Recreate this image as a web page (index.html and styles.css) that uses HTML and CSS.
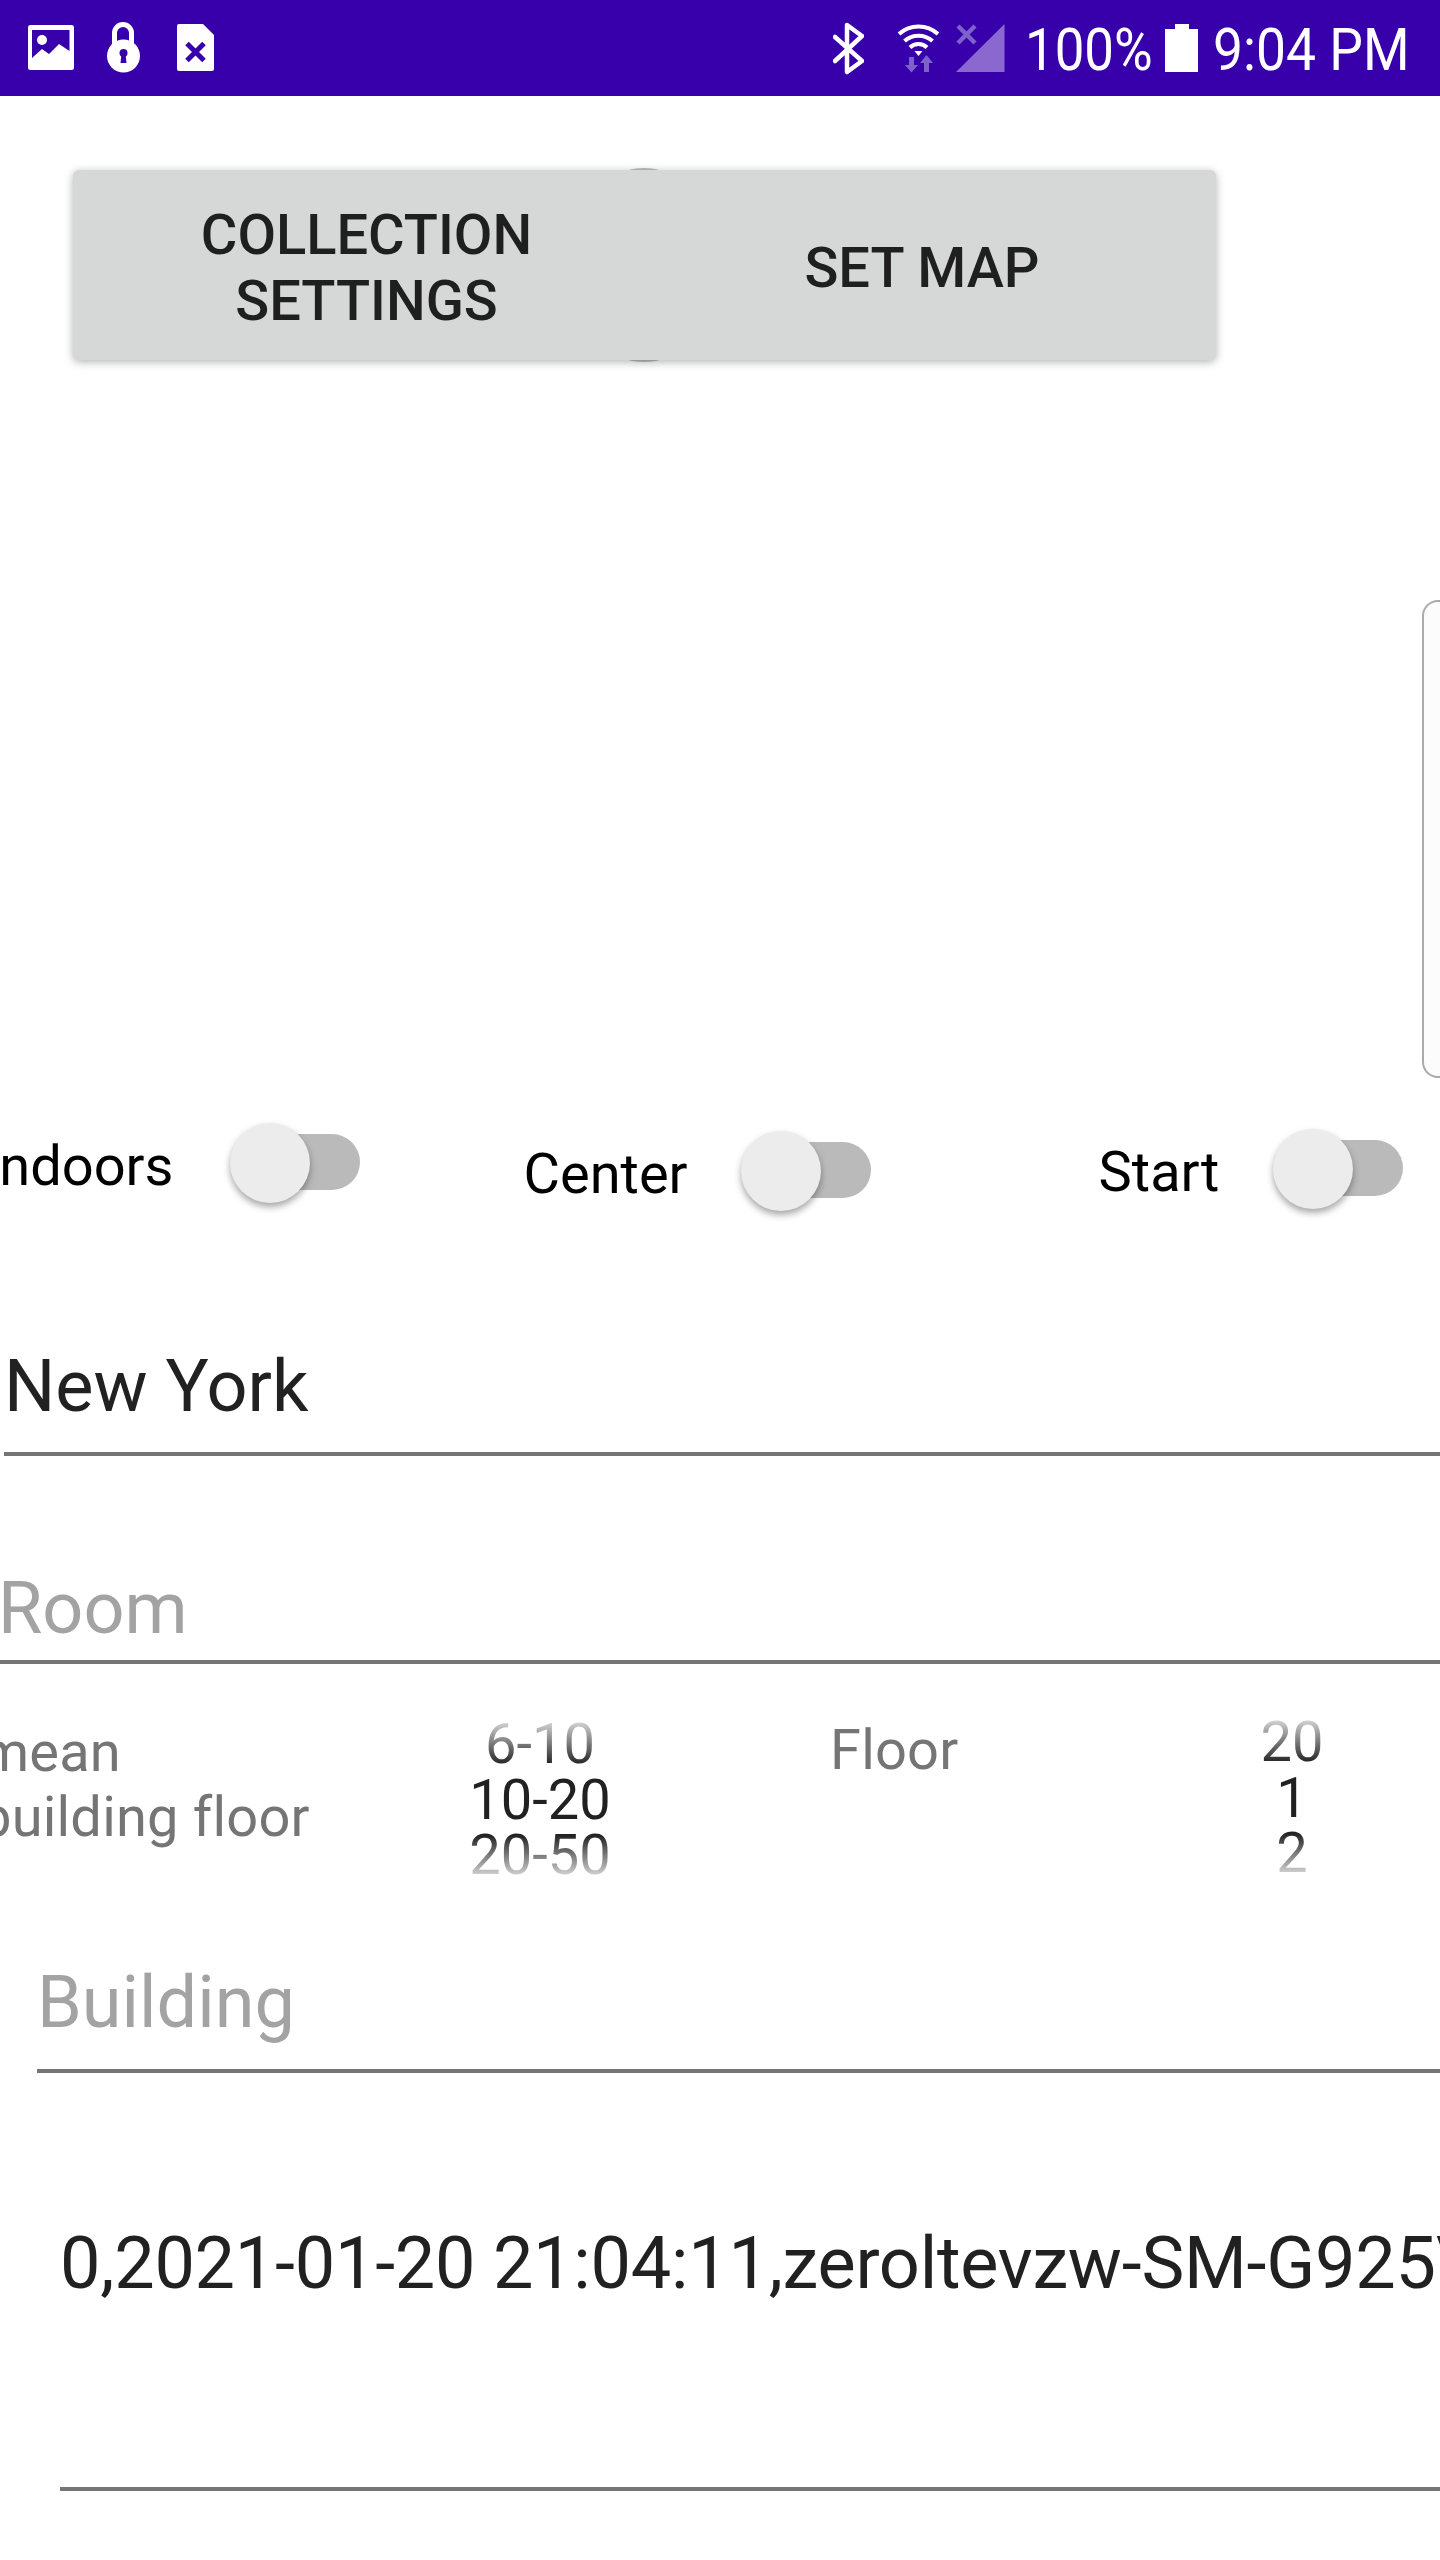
FILE: index.html
```html
<!DOCTYPE html>
<html>
<head>
    <title>Collection</title>
    <meta charset="UTF-8">
    <link rel="stylesheet" href="styles.css">
</head>
<body>
    <div class="status-bar">
        <svg class="icon-image" viewBox="28 0 46 96">
            <rect x="28" y="25" width="46" height="45" rx="2.5" fill="#fff"/>
            <polygon points="32,30 69.5,30 69.5,51 59,44 49,54 42,49 32,58" fill="#3700ab"/>
            <circle cx="42" cy="40" r="5" fill="#fff"/>
        </svg>
        <svg class="icon-lock" viewBox="107 0 33 96">
            <path d="M114.5 46V33a8.500 8.500 0 0 1 17 0v13" fill="none" stroke="#fff" stroke-width="5"/>
            <circle cx="123.500" cy="56" r="16.500" fill="#fff"/>
            <circle cx="123.500" cy="53" r="4" fill="#3700ab"/>
            <polygon points="121.500,54 125.500,54 126.500,63 120.500,63" fill="#3700ab"/>
        </svg>
        <svg class="icon-sim" viewBox="177 0 37 96">
            <path d="M179 24h24l11 11v34a2 2 0 0 1-2 2h-33a2 2 0 0 1-2-2V26a2 2 0 0 1 2-2z" fill="#fff"/>
            <path d="M187 43.500l17 17M204 43.500l-17 17" stroke="#3700ab" stroke-width="5"/>
        </svg>

        <div class="status-right">
            <svg class="icon-bt" viewBox="833 0 31 96">
                <path d="M835 37l27 24-15 11V25l15 11-27 25" fill="none" stroke="#fff" stroke-width="4.500" stroke-linejoin="round" stroke-linecap="round"/>
            </svg>
            <svg class="icon-wifi" viewBox="897 0 43 96">
                <path d="M899 34a29 29 0 0 1 39 0M904.500 41a21 21 0 0 1 28 0M910 47.500a12 12 0 0 1 17 0" fill="none" stroke="#fff" stroke-width="4"/>
                <polygon points="914.500,51 922.500,51 918.500,56" fill="#fff"/>
                <path d="M909 57h5v8h4l-6.500 7.500L905 65h4zM924 72h5v-9h4l-6.500-8-6.500 8h4z" fill="#7d62cc"/>
            </svg>
            <svg class="icon-signal" viewBox="956 0 49 96">
                <polygon points="1004.500,24 1004.500,72 956,72" fill="#8a68cf"/>
                <path d="M958 26l17 17M975 26l-17 17" stroke="#7d62cc" stroke-width="4.500"/>
            </svg>
            <span class="status-text battery-text">100%</span>
            <svg class="icon-battery" viewBox="1164 0 33 96">
                <path d="M1174 24h14v5h9v43h-33V29h10z" fill="#fff"/>
            </svg>
            <span class="status-text time-text">9:04 PM</span>
        </div>
    </div>

    <div class="button-row">
        <button class="flat-button">COLLECTION SETTINGS</button>
        <button class="flat-button second">SET MAP</button>
    </div>

    <div class="side-card"></div>

    <div class="switch-row">
        <div class="switch-group indoors">
            <span class="switch-label">Indoors</span>
            <div class="switch"><div class="thumb"></div><div class="track"></div></div>
        </div>
        <div class="switch-group center">
            <span class="switch-label">Center</span>
            <div class="switch"><div class="thumb"></div><div class="track"></div></div>
        </div>
        <div class="switch-group start">
            <span class="switch-label">Start</span>
            <div class="switch"><div class="thumb"></div><div class="track"></div></div>
        </div>
    </div>

    <div class="field city">New York</div>
    <div class="field room hint">Room</div>

    <div class="picker-row">
        <div class="picker-label first">mean<br>building floor</div>
        <div class="picker">
            <div>6-10</div>
            <div class="current">10-20</div>
            <div>20-50</div>
        </div>
        <div class="picker-label floor">Floor</div>
        <div class="picker second">
            <div>20</div>
            <div class="current">1</div>
            <div>2</div>
        </div>
    </div>

    <div class="field building hint">Building</div>
    <div class="field log">0,2021-01-20 21:04:11,zeroltevzw-SM-G925V</div>
</body>
</html>
```

FILE: styles.css
```css
html, body {
    margin: 0;
    padding: 0;
    background: #ffffff;
}
body {
    width: 1440px;
    height: 2560px;
    overflow: hidden;
    font-family: 'Roboto', sans-serif;
    color: #212121;
}

/* status bar */
.status-bar {
    display: flex;
    height: 96px;
    padding-left: 28px;
    background: #3700ab;
}
.status-bar svg {
    height: 96px;
    flex: none;
}
.icon-image { width: 46px; }
.icon-lock { width: 33px; margin-left: 33px; }
.icon-sim { width: 37px; margin-left: 37px; }
.status-right {
    display: flex;
    margin-left: 619px;
}
.icon-bt { width: 31px; }
.icon-wifi { width: 43px; margin-left: 33px; }
.icon-signal { width: 49px; margin-left: 16px; }
.icon-battery { width: 33px; }
.status-text {
    height: 96px;
    font-size: 60px;
    line-height: 99px;
    color: #ffffff;
    white-space: nowrap;
    transform-origin: left;
}
.battery-text {
    width: 140px;
    margin-left: 20px;
    transform: scaleX(0.88);
}
.time-text {
    width: 190px;
    margin-left: 15px;
    transform: scaleX(0.89);
}

/* buttons */
.button-row {
    position: relative;
    display: flex;
    margin: 74px 0 0 73px;
    filter: drop-shadow(0 2px 4px rgba(0, 0, 0, 0.3));
}
.button-row::before {
    content: "";
    position: absolute;
    top: -2px;
    left: 555px;
    width: 32px;
    height: 194px;
    border-radius: 50% / 3px;
    background: rgba(0, 0, 0, 0.25);
}
.flat-button {
    position: relative;
    width: 587px;
    height: 190px;
    padding: 6px 100px 0;
    border: none;
    border-radius: 6px;
    background: #d6d7d7;
    color: #1f1f1f;
    font-family: 'Roboto', sans-serif;
    font-size: 56px;
    font-weight: 500;
    line-height: 66px;
}
.flat-button.second {
    width: 588px;
    margin-left: -32px;
}

.side-card {
    width: 40px;
    height: 474px;
    margin: 240px 0 0 1422px;
    border: 2px solid #aaaaaa;
    border-right: none;
    border-radius: 16px 0 0 16px;
    background: #fcfcfc;
}

/* switches */
.switch-row {
    display: flex;
    align-items: flex-start;
    margin-top: 48px;
}
.switch-group {
    display: flex;
    align-items: center;
    height: 80px;
    flex: none;
}
.switch-label {
    font-size: 56px;
    line-height: 80px;
    color: #000000;
}
.switch {
    display: flex;
    align-items: center;
    margin-bottom: 6px;
}
.thumb {
    position: relative;
    width: 80px;
    height: 80px;
    border-radius: 50%;
    background: #ececec;
    box-shadow: 0 4px 7px rgba(0, 0, 0, 0.35);
}
.track {
    width: 116px;
    height: 56px;
    margin: -2px 0 0 -66px;
    border-radius: 28px;
    background: #bababa;
}
.indoors { margin-left: -16px; }
.indoors .switch-label { margin-right: 56px; }
.center { margin: 8px 0 0 164px; }
.center .switch-label { margin-right: 53px; }
.start { margin: 6px 0 0 228px; }
.start .switch-label { margin-right: 54px; }

/* text fields */
.field {
    font-size: 72px;
    line-height: 88px;
    white-space: nowrap;
    overflow: hidden;
    border-bottom: 4px solid #757575;
}
.hint {
    color: #a3a3a3;
}
.city {
    margin: 129px 0 0 4px;
    padding-bottom: 21px;
}
.room {
    margin-top: 109px;
    padding-bottom: 7px;
    margin-left: -2px;
}
.building {
    margin: 242px 0 0 37px;
    padding-bottom: 22px;
}
.log {
    margin: 147px 0 0 60px;
    padding-bottom: 179px;
    letter-spacing: -0.24px;
}

/* pickers */
.picker-row {
    display: grid;
    grid-template-columns: 420px 280px 482px 260px;
    margin: 53px 0 0 -20px;
    height: 0;
}
.picker-label {
    font-size: 56px;
    line-height: 65px;
    color: #757575;
    white-space: nowrap;
    letter-spacing: 0.2px;
}
.picker-label.first { padding-top: 3px; }
.picker-label.floor { padding: 1px 0 0 150px; }
.picker {
    height: 166px;
    font-size: 56px;
    line-height: 55.5px;
    text-align: center;
    -webkit-mask-image: linear-gradient(to bottom, rgba(0, 0, 0, 0.1), #000 29%, #000 71%, rgba(0, 0, 0, 0.05));
    mask-image: linear-gradient(to bottom, rgba(0, 0, 0, 0.1), #000 29%, #000 71%, rgba(0, 0, 0, 0.05));
}
.picker.second { margin-top: -2px; }
```
